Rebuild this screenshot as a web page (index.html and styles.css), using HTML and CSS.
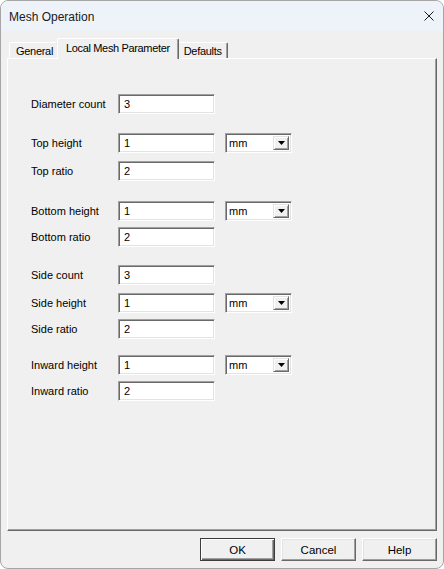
FILE: index.html
```html
<!DOCTYPE html>
<html>
<head>
<meta charset="utf-8">
<title>Mesh Operation</title>
<link rel="stylesheet" href="styles.css">
</head>
<body>
<div class="window">
  <div class="titlebar">
    <span class="title">Mesh Operation</span>
    <svg class="close" width="10" height="10" viewBox="0 0 10 10"><path d="M0.5 0.5 L9.5 9.5 M9.5 0.5 L0.5 9.5" stroke="#1a1a1a" stroke-width="1" fill="none"/></svg>
  </div>
  <div class="content">
    <div class="tabs">
      <div class="tab">General</div>
      <div class="tab active">Local Mesh Parameter</div>
      <div class="tab">Defaults</div>
    </div>
    <div class="panel">
      <div class="row first"><span class="label">Diameter count</span><div class="field">3</div></div>

      <div class="row g19"><span class="label">Top height</span><div class="field">1</div><div class="combo"><span>mm</span><span class="arrow"><svg width="7" height="4" viewBox="0 0 7 4"><path d="M0 0 H7 L3.5 4 Z" fill="#000"/></svg></span></div></div>
      <div class="row g8"><span class="label">Top ratio</span><div class="field">2</div></div>

      <div class="row g20"><span class="label">Bottom height</span><div class="field">1</div><div class="combo"><span>mm</span><span class="arrow"><svg width="7" height="4" viewBox="0 0 7 4"><path d="M0 0 H7 L3.5 4 Z" fill="#000"/></svg></span></div></div>
      <div class="row g6"><span class="label">Bottom ratio</span><div class="field">2</div></div>

      <div class="row g18"><span class="label">Side count</span><div class="field">3</div></div>
      <div class="row g8"><span class="label">Side height</span><div class="field">1</div><div class="combo"><span>mm</span><span class="arrow"><svg width="7" height="4" viewBox="0 0 7 4"><path d="M0 0 H7 L3.5 4 Z" fill="#000"/></svg></span></div></div>
      <div class="row g6"><span class="label">Side ratio</span><div class="field">2</div></div>

      <div class="row g16"><span class="label">Inward height</span><div class="field">1</div><div class="combo"><span>mm</span><span class="arrow"><svg width="7" height="4" viewBox="0 0 7 4"><path d="M0 0 H7 L3.5 4 Z" fill="#000"/></svg></span></div></div>
      <div class="row g6"><span class="label">Inward ratio</span><div class="field">2</div></div>
    </div>
    <div class="buttons">
      <div class="btn default">OK</div>
      <div class="btn">Cancel</div>
      <div class="btn">Help</div>
    </div>
  </div>
</div>
</body>
</html>
```
FILE: styles.css
```css
html, body {
  margin: 0;
  padding: 0;
  background: #ffffff;
}
body {
  font-family: "Liberation Sans", Arial, sans-serif;
  color: #000;
}
.window {
  width: 444px;
  height: 569px;
  box-sizing: border-box;
  border: 1px solid #a6a6a6;
  border-radius: 8px;
  overflow: hidden;
  background: #f0f0f0;
  display: flex;
  flex-direction: column;
}
.titlebar {
  height: 30px;
  flex: none;
  background: #eef3f9;
  display: flex;
  align-items: center;
  justify-content: space-between;
  padding: 0 9px 0 8px;
}
.title {
  font-size: 12px;
  color: #1a1a1a;
  padding-top: 1px;
}
.content {
  flex: 1;
  display: flex;
  flex-direction: column;
  padding: 7px 6px 7px 6px;
}
.tabs {
  display: flex;
  align-items: flex-end;
  height: 20px;
  padding-left: 2px;
  position: relative;
  z-index: 1;
}
.tab {
  height: 16px;
  box-sizing: border-box;
  padding: 1px 5px 0 6px;
  font-size: 11px;
  letter-spacing: -0.3px;
  line-height: 15px;
  border-top: 1px solid #ffffff;
  border-left: 1px solid #ffffff;
  border-right: 1px solid #696969;
  box-shadow: inset -1px 0 0 #a0a0a0;
  border-radius: 2px 2px 0 0;
  background: #f0f0f0;
  white-space: nowrap;
}
.tab.active {
  height: 21px;
  margin: 0 -2px -1px -2px;
  padding: 2px 8px 0 8px;
  position: relative;
  z-index: 2;
  letter-spacing: -0.35px;
}
.panel {
  flex: 1;
  box-sizing: border-box;
  border-top: 1px solid #ffffff;
  border-left: 1px solid #ffffff;
  border-right: 1px solid #696969;
  border-bottom: 1px solid #696969;
  box-shadow: inset -1px -1px 0 #a0a0a0;
  padding: 35px 0 0 23px;
  display: flex;
  flex-direction: column;
}
.row {
  display: flex;
  align-items: center;
  height: 20px;
}
.row.g6 { margin-top: 6px; }
.row.g8 { margin-top: 8px; }
.row.g16 { margin-top: 16px; }
.row.g18 { margin-top: 18px; }
.row.g19 { margin-top: 19px; }
.row.g20 { margin-top: 20px; }
.label {
  width: 87px;
  font-size: 11px;
  margin-top: -1px;
  color: #000;
}
.field {
  width: 97px;
  height: 20px;
  box-sizing: border-box;
  background: #ffffff;
  border-top: 1px solid #a0a0a0;
  border-left: 1px solid #a0a0a0;
  border-right: 1px solid #ffffff;
  border-bottom: 1px solid #ffffff;
  box-shadow: inset 1px 1px 0 #696969, inset -1px -1px 0 #e3e3e3;
  font-size: 11px;
  line-height: 18px;
  padding-left: 5px;
}
.combo {
  margin-left: 10px;
  width: 67px;
  height: 20px;
  box-sizing: border-box;
  background: #ffffff;
  border-top: 1px solid #a0a0a0;
  border-left: 1px solid #a0a0a0;
  border-right: 1px solid #ffffff;
  border-bottom: 1px solid #ffffff;
  box-shadow: inset 1px 1px 0 #696969, inset -1px -1px 0 #e3e3e3;
  display: flex;
  align-items: stretch;
  justify-content: space-between;
  padding: 2px;
  font-size: 11px;
}
.combo span:first-child {
  line-height: 15px;
  padding-left: 1px;
}
.arrow {
  width: 16px;
  box-sizing: border-box;
  background: #f0f0f0;
  border-top: 1px solid #e3e3e3;
  border-left: 1px solid #e3e3e3;
  border-right: 1px solid #696969;
  border-bottom: 1px solid #696969;
  box-shadow: inset 1px 1px 0 #ffffff, inset -1px -1px 0 #a0a0a0;
  display: flex;
  align-items: center;
  justify-content: center;
}
.buttons {
  display: flex;
  justify-content: flex-end;
  gap: 6px;
  margin-top: 7px;
}
.btn {
  width: 75px;
  height: 23px;
  box-sizing: border-box;
  border-top: 1px solid #ffffff;
  border-left: 1px solid #ffffff;
  border-right: 1px solid #696969;
  border-bottom: 1px solid #696969;
  box-shadow: inset -1px -1px 0 #a0a0a0, inset 1px 1px 0 #e3e3e3;
  background: #f0f0f0;
  font-size: 11.5px;
  display: flex;
  align-items: center;
  justify-content: center;
}
.btn.default {
  border: 1px solid #3c3c3c;
  box-shadow: inset 1px 1px 0 #ffffff, inset -1px -1px 0 #696969, inset -2px -2px 0 #a0a0a0;
}
```
